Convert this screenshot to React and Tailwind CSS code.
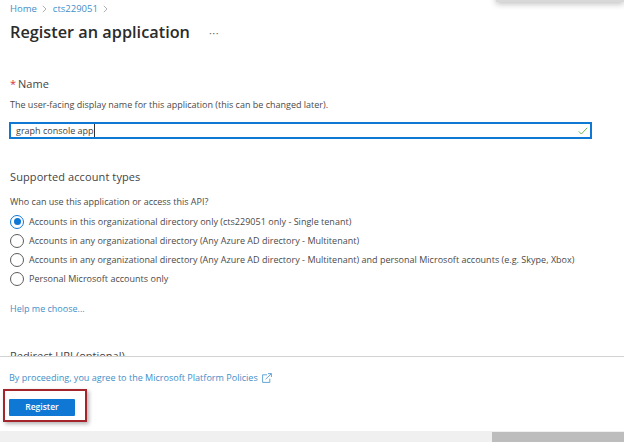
const font = { fontFamily: '"Open Sans", "Noto Sans", sans-serif' };

function Radio({ checked, children }) {
  return (
    <div className="flex h-[19px] items-center">
      <span className={`flex h-[14px] w-[14px] shrink-0 items-center justify-center rounded-full border ${checked ? "border-[#0f78d4]" : "border-[#5c5c5c]"}`}>
        {checked && <span className="h-[7px] w-[7px] rounded-full bg-[#0f78d4]" />}
      </span>
      <span className="ml-[5px] whitespace-nowrap text-[9px] tracking-[0.02px] text-[#4a4a4a]">{children}</span>
    </div>
  );
}

function Chevron() {
  return (
    <svg width="5" height="8" viewBox="0 0 5 8" fill="none" stroke="#9a9a9a" strokeWidth="0.8" className="ml-[5px]">
      <path d="M0.8 0.8 L4 4 L0.8 7.2" />
    </svg>
  );
}

export default function App() {
  return (
    <div className="relative flex h-[442px] w-[624px] flex-col overflow-hidden bg-white antialiased" style={font}>
      <div className="pointer-events-none absolute right-0 top-[-12px] h-[14px] w-[128px] bg-[#d8d8d8] shadow-[0_2px_6px_rgba(0,0,0,0.25)]" />

      <div className="h-[357px] shrink-0 overflow-hidden border-b border-[#d2d2d2] pl-[10px]">
        <div className="mt-[2px] flex h-[14px] items-center text-[9.5px] text-[#3f8fc9]">
          <span>Home</span>
          <Chevron />
          <span className="ml-[6px]">cts229051</span>
          <Chevron />
        </div>
        <div className="mt-[3px] flex h-[27px] items-center">
          <h1 className="whitespace-nowrap text-[16.3px] font-semibold leading-none text-[#2b2b2b]">Register an application</h1>
          <span className="ml-[19px] text-[11px] leading-none tracking-[0.5px] text-[#666]">···</span>
        </div>

        <div className="mt-[31px] flex h-[14px] items-center text-[11px] text-[#444]">
          <span className="mr-[2px] text-[#d13438]">*</span>
          <span>Name</span>
        </div>
        <p className="mt-[7px] whitespace-nowrap text-[9px] leading-[14px] text-[#4a4a4a]">
          The user-facing display name for this application (this can be changed later).
        </p>
        <div className="-ml-[1px] mt-[10px] flex h-[17px] w-[583px] items-center justify-between border-2 border-[#0f78d4] pl-[5px] pr-[2px]">
          <span className="border-r border-[#333] text-[9px] leading-[13px] text-[#444]">graph console app</span>
          <svg width="10" height="8" viewBox="0 0 10 8" fill="none" stroke="#6cb45a" strokeWidth="1">
            <path d="M0.8 4.4 L3.4 7 L9.2 0.8" />
          </svg>
        </div>

        <h2 className="mt-[30px] h-[16px] text-[11px] font-normal leading-[16px] tracking-[0.1px] text-[#444]">Supported account types</h2>
        <p className="mt-[10px] h-[14px] text-[9px] leading-[14px] text-[#4a4a4a]">Who can use this application or access this API?</p>
        <div className="mt-[3px] flex flex-col">
          <Radio checked>Accounts in this organizational directory only (cts229051 only - Single tenant)</Radio>
          <Radio>Accounts in any organizational directory (Any Azure AD directory - Multitenant)</Radio>
          <Radio>Accounts in any organizational directory (Any Azure AD directory - Multitenant) and personal Microsoft accounts (e.g. Skype, Xbox)</Radio>
          <Radio>Personal Microsoft accounts only</Radio>
        </div>
        <a className="mt-[14px] block h-[14px] text-[9px] leading-[14px] text-[#3f8fc9]">Help me choose...</a>
        <h2 className="mt-[32px] h-[16px] whitespace-nowrap text-[11px] font-normal leading-[16px] text-[#444]">Redirect URI (optional)</h2>
      </div>

      <div className="flex flex-1 flex-col">
        <div className="ml-[9px] mt-[13px] flex h-[16px] items-center text-[9.05px] text-[#3f8fc9]">
          <span>By proceeding, you agree to the Microsoft Platform Policies</span>
          <svg width="10" height="10" viewBox="0 0 10 10" fill="none" stroke="#3f8fc9" strokeWidth="0.8" className="ml-[4px]">
            <path d="M5 1.8 H0.6 V9.4 H7.8 V5.6" />
            <path d="M3.6 6.2 L9.2 0.8 M6 0.6 H9.4 V4" />
          </svg>
        </div>
        <div className="ml-[3px] mt-[3px] w-[84px] border-2 border-[#a4262c] pb-[4px] pl-[4px] pt-[8px] shadow-[2px_2px_4px_rgba(0,0,0,0.3)]">
          <button className="flex h-[17px] w-[66px] items-center justify-center rounded-[1px] bg-[#0f78d4] text-[8.5px] font-semibold text-white">Register</button>
        </div>
      </div>

      <div className="flex h-[11px] shrink-0 justify-end bg-[#f0f0f0]">
        <div className="mt-[1px] w-[132px] bg-[#bdbdbd]" />
      </div>
    </div>
  );
}
